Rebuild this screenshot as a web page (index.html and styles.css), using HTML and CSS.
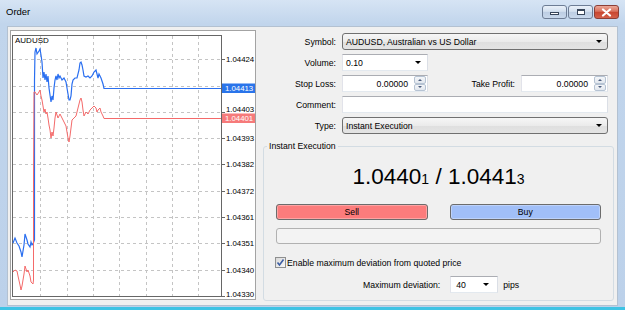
FILE: index.html
```html
<!DOCTYPE html>
<html lang="en">
<head>
    <meta charset="UTF-8">
    <meta name="viewport" content="width=device-width, initial-scale=1.0">
    <title>Order</title>
    <link rel="stylesheet" href="styles.css">
</head>
<body>
    <div class="window">
        <div class="titlebar">
            <span class="title">Order</span>
            <div class="caption-buttons">
                <span class="cap-btn"><span class="glyph-min"></span></span>
                <span class="cap-btn"><span class="glyph-max"></span></span>
                <span class="cap-btn close">
                    <svg width="11" height="9" viewBox="0 0 11 9"><path d="M2 1.5 L9 7.5 M9 1.5 L2 7.5" stroke="#fff" stroke-width="2.2" stroke-linecap="round"/></svg>
                </span>
            </div>
        </div>
        <div class="client">
            <!-- Tick chart -->
            <div class="chart">
                <svg width="244" height="268" viewBox="11 31 244 268">
                    <g stroke="#c4c4c4" stroke-dasharray="3 3" shape-rendering="crispEdges">
                        <path d="M40.5 36V296 M67.5 36V296 M93.5 36V296 M119.5 36V296 M146.5 36V296 M172.5 36V296 M198.5 36V296"/>
                        <path d="M13 59.5H221 M13 86.5H221 M13 112.5H221 M13 138.5H221 M13 164.5H221 M13 191.5H221 M13 217.5H221 M13 243.5H221 M13 270.5H221"/>
                    </g>
                    <rect x="12.5" y="35.5" width="209" height="261" fill="none" stroke="#666" shape-rendering="crispEdges"/>
                    <path d="M221 59.5h4 M221 112.5h4 M221 138.5h4 M221 164.5h4 M221 191.5h4 M221 217.5h4 M221 243.5h4 M221 270.5h4 M221 296.5h4" stroke="#666" shape-rendering="crispEdges"/>
                    <g font-family="Liberation Sans, Arial, sans-serif" font-size="7.8" fill="#000">
                        <text x="15" y="43" font-size="8">AUDUSD</text>
                        <text x="226" y="62">1.04424</text>
                        <text x="226" y="111.5">1.04403</text>
                        <text x="226" y="141">1.04393</text>
                        <text x="226" y="167">1.04382</text>
                        <text x="226" y="194">1.04372</text>
                        <text x="226" y="220">1.04361</text>
                        <text x="226" y="246">1.04351</text>
                        <text x="226" y="273">1.04340</text>
                        <text x="226" y="297">1.04330</text>
                    </g>
                    <polyline fill="none" stroke="#2a6ff0" stroke-width="1.2" points="13,243 15,238 17,243 19,246 21,252 22,257 24,245 25,234 27,240 28,244 30,247 31,242 32,245 33,244 34.5,240 34.5,150 34.5,80 35,52 36,48 37,54 39,51 40,49 41,55 42,62 43,78 44,72 45,80 46,74 47,82 48,76 49,88 50,95 51,102 52,96 53,100 54,88 55,80 56,76 57,80 58,74 59,78 60,76 62,80 64,78 66,82 67,88 68,94 69,100 70,100 71,96 72,84 73,80 75,78 77,78 79,70 80,63 81,62 82,65 83,70 84,76 86,77 88,76 90,78 92,76 94,72 96,70 97,74 98,78 99,74 101,78 103,84 104,88.5 221,88.5"/>
                    <polyline fill="none" stroke="#f46a6a" stroke-width="1" points="13,272 15,270 17,271 18,276 20,285 21,290 22,286 24,274 25,266 27,272 28,270 30,276 31,282 33,284 33.5,280 33.5,178 34,92 35,92 37,95 39,92 40,90 41,96 42,100 43,106 44,112 45,109 46,114 47,112 48,118 49,125 50,130 51,138 52,132 53,136 54,128 55,118 56,112 58,118 60,114 62,118 64,122 66,126 67,132 68,138 69,142 70,136 71,128 72,120 74,118 76,116 78,108 80,100 81,98 82,102 83,110 84,116 86,112 88,114 90,110 92,108 94,106 96,108 97,112 98,110 100,108 101,112 103,116 104,118.5 221,118.5"/>
                    <rect x="222" y="83.5" width="33" height="9.5" fill="#2a74ea"/>
                    <rect x="222" y="113.5" width="33" height="9.5" fill="#f67a7a"/>
                    <g font-family="Liberation Sans, Arial, sans-serif" font-size="7.8" fill="#fff">
                        <text x="225" y="91.3">1.04413</text>
                        <text x="225" y="121.3">1.04401</text>
                    </g>
                </svg>
            </div>

            <!-- Order form -->
            <div class="panel">
                <div class="form">
                    <span class="lbl">Symbol:</span>
                    <div class="combo">AUDUSD, Australian vs US Dollar<span class="arrow"></span></div>

                    <span class="lbl">Volume:</span>
                    <div class="edit volume">0.10<span class="arrow"></span></div>

                    <span class="lbl">Stop Loss:</span>
                    <div class="row-pair">
                        <div class="edit spin-edit">0.00000
                            <span class="spinner"><span class="spin up"></span><span class="spin down"></span></span>
                        </div>
                        <span class="lbl2">Take Profit:</span>
                        <div class="edit spin-edit take">0.00000
                            <span class="spinner"><span class="spin up"></span><span class="spin down"></span></span>
                        </div>
                    </div>

                    <span class="lbl">Comment:</span>
                    <div class="edit"></div>

                    <span class="lbl">Type:</span>
                    <div class="combo">Instant Execution<span class="arrow"></span></div>
                </div>

                <fieldset class="exec">
                    <legend>Instant Execution</legend>
                    <div class="quote">1.0440<small>1</small> / 1.0441<small>3</small></div>
                    <div class="trade-buttons">
                        <button class="btn sell">Sell</button>
                        <button class="btn buy">Buy</button>
                    </div>
                    <div class="status-bar"></div>
                    <label class="check">
                        <span class="checkbox">
                            <svg width="9" height="9" viewBox="0 0 9 9"><path d="M1.5 4.5 L3.5 7 L7.5 1.5" fill="none" stroke="#3d5ea3" stroke-width="1.6"/></svg>
                        </span>
                        Enable maximum deviation from quoted price
                    </label>
                    <div class="deviation">
                        <span>Maximum deviation:</span>
                        <div class="edit dev">40<span class="arrow"></span></div>
                        <span>pips</span>
                    </div>
                </fieldset>
            </div>
        </div>
    </div>
</body>
</html>
```

FILE: styles.css
```css
/* General styles */
body {
    margin: 0;
    font-family: "Liberation Sans", Arial, sans-serif;
    font-size: 8.7px;
    color: #000;
    background: #fff;
}
.window {
    width: 625px;
    height: 310px;
    box-sizing: border-box;
    background: linear-gradient(#d6e4f4, #c1d5ec 24px, #bcd1ea);
    border-bottom: 3px solid #3ec3e4;
}
/* Title bar */
.titlebar {
    display: flex;
    height: 26px;
    box-sizing: border-box;
    padding: 5px 6px 0 6px;
}
.title {
    flex: 1;
    font-size: 9.5px;
    line-height: 14px;
}
.caption-buttons {
    display: flex;
    gap: 1px;
}
.cap-btn {
    width: 25px;
    height: 14px;
    box-sizing: border-box;
    border: 1px solid #6d7d95;
    border-radius: 3px;
    background: linear-gradient(#eaf1f9, #d3e0ef 45%, #bccde3 50%, #c8d8ec);
    display: flex;
    align-items: center;
    justify-content: center;
}
.cap-btn.close {
    border-color: #8b3f37;
    background: linear-gradient(#eba898, #d9705c 45%, #c8452f 50%, #d4604a);
}
.glyph-min {
    width: 9px;
    height: 3px;
    box-sizing: border-box;
    border: 1px solid #38465a;
    background: #fff;
    margin-top: 3px;
}
.glyph-max {
    width: 8px;
    height: 6px;
    box-sizing: border-box;
    border: 1px solid #38465a;
    border-top-width: 2px;
    background: #fff;
}
/* Client area */
.client {
    display: flex;
    align-items: flex-start;
    height: 280px;
    margin: 0 7px;
    box-sizing: border-box;
    border: 1px solid #b3c1d1;
    background: #f0f0f0;
}
.chart {
    width: 246px;
    height: 270px;
    margin: 3px 0 0 2px;
    box-sizing: border-box;
    border: 1px solid #a3a3a3;
    background: #fff;
}
.chart svg {
    display: block;
}
/* Form */
.panel {
    width: 351px;
    margin: 6px 0 0 7px;
}
.form {
    display: grid;
    grid-template-columns: 73px 266px;
    grid-auto-rows: 17px;
    column-gap: 6px;
    row-gap: 4px;
    align-items: center;
}
.lbl {
    text-align: right;
}
.combo {
    height: 17px;
    box-sizing: border-box;
    border: 1px solid #707070;
    border-radius: 3px;
    background: linear-gradient(#f6f6f6, #ebebeb 50%, #dfdfdf 51%, #e4e4e4);
    display: flex;
    align-items: center;
    padding-left: 3px;
}
.arrow {
    margin-left: auto;
    margin-right: 5px;
    border-left: 3.5px solid transparent;
    border-right: 3.5px solid transparent;
    border-top: 3.5px solid #000;
}
.edit {
    height: 17px;
    box-sizing: border-box;
    border: 1px solid #abadb3;
    border-color: #abadb3 #dbdfe6 #e3e9ef #e2e3ea;
    background: #fff;
    display: flex;
    align-items: center;
    padding: 0 3px;
}
.edit.volume {
    width: 86px;
}
.edit.volume .arrow {
    margin-right: 3px;
}
.row-pair {
    display: flex;
    align-items: center;
}
.spin-edit {
    width: 86px;
    justify-content: flex-end;
    padding: 0 1px 0 3px;
}
.spin-edit.take {
    width: 87px;
}
.lbl2 {
    flex: 1;
    text-align: right;
    padding-right: 6px;
}
.spinner {
    display: flex;
    flex-direction: column;
    width: 12px;
    height: 15px;
    margin-left: 6px;
}
.spin {
    flex: 1;
    box-sizing: border-box;
    border: 1px solid #b6c3d3;
    border-radius: 2px;
    background: linear-gradient(#f4f6f9, #e2e7ee);
    display: flex;
    align-items: center;
    justify-content: center;
}
.spin.up::before {
    content: "";
    border-left: 2.5px solid transparent;
    border-right: 2.5px solid transparent;
    border-bottom: 2.5px solid #4b5d7e;
}
.spin.down::before {
    content: "";
    border-left: 2.5px solid transparent;
    border-right: 2.5px solid transparent;
    border-top: 2.5px solid #4b5d7e;
}
/* Instant execution group */
.exec {
    margin: 6px 0 0 0;
    padding: 0 12px 7px 12px;
    border: 1px solid #d3dce3;
    border-radius: 3px;
    min-width: 0;
}
.exec legend {
    padding: 0 2px;
    margin-left: -9px;
    line-height: 13px;
}
.quote {
    margin-top: 11px;
    text-align: center;
    font-size: 22.5px;
    line-height: 26px;
}
.quote small {
    font-size: 14px;
}
.trade-buttons {
    display: grid;
    grid-template-columns: 1fr 1fr;
    column-gap: 22px;
    margin-top: 12px;
}
.btn {
    height: 16px;
    padding: 0;
    border: 1px solid #6c6c6c;
    border-radius: 3px;
    box-shadow: inset 0 0 0 1px rgba(255, 255, 255, 0.3);
    font: inherit;
    color: #000;
}
.btn.sell {
    background-color: #fc7c7c;
}
.btn.buy {
    background-color: #a1bff8;
}
.status-bar {
    height: 16px;
    margin-top: 8px;
    box-sizing: border-box;
    border: 1px solid #b1b1b1;
    border-radius: 3px;
    background: #f3f3f3;
}
.check {
    display: flex;
    align-items: center;
    height: 13px;
    margin-top: 12px;
}
.checkbox {
    width: 11px;
    height: 11px;
    box-sizing: border-box;
    margin: 0 1px 0 -1px;
    border: 1px solid #8e8f8f;
    background: linear-gradient(135deg, #d8d8d8, #f8f8f8);
    display: flex;
    align-items: center;
    justify-content: center;
}
.checkbox svg {
    display: block;
}
.deviation {
    display: flex;
    align-items: center;
    height: 17px;
    margin-top: 7px;
    padding-left: 87px;
}
.edit.dev {
    width: 48px;
    margin: 0 5px 0 10px;
    padding-left: 5px;
}
```
